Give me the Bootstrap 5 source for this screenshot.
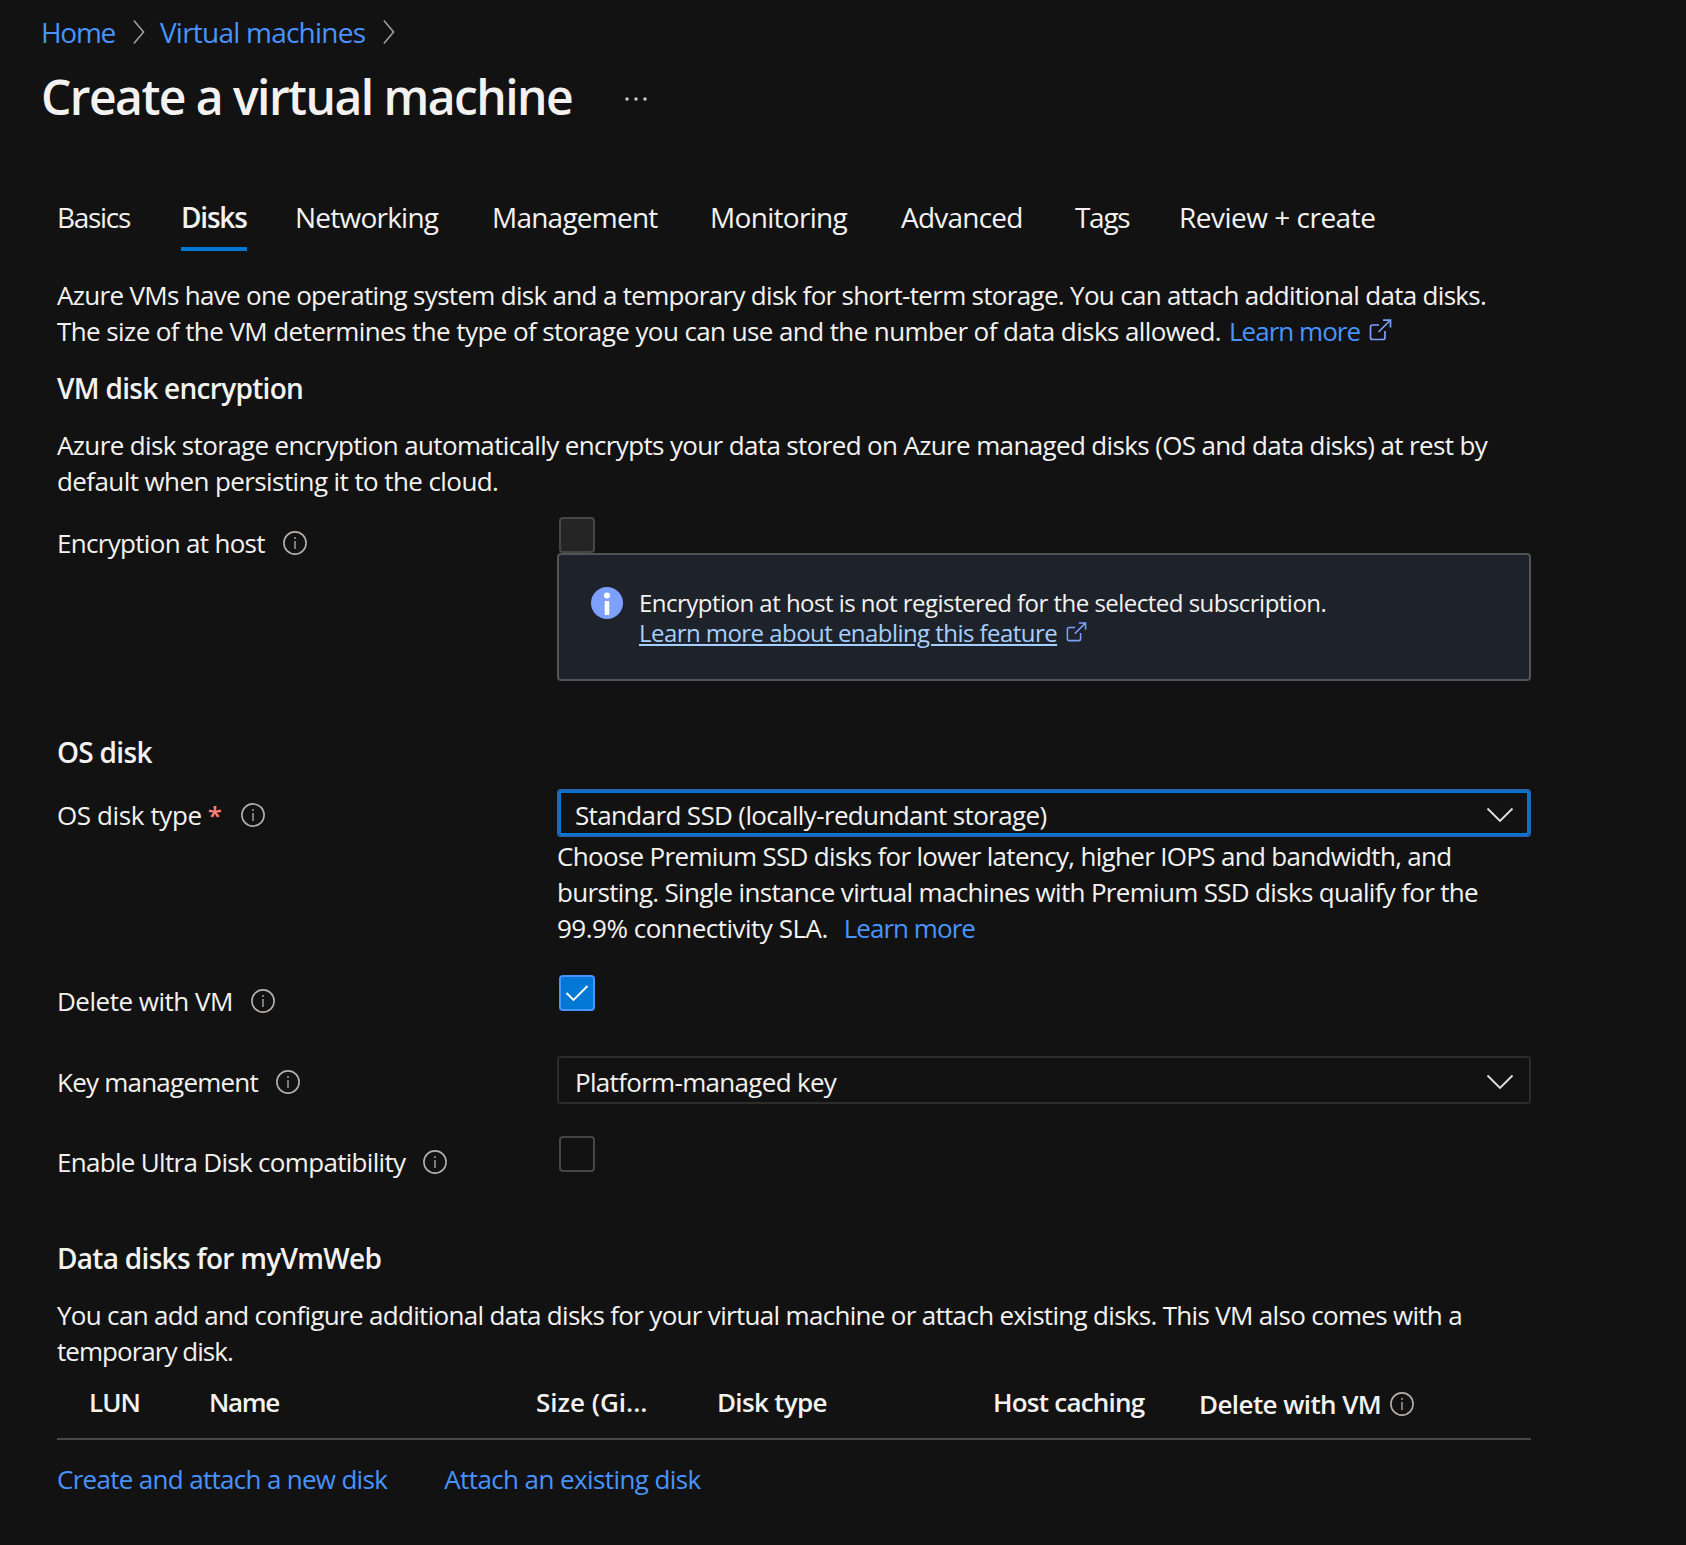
<!DOCTYPE html>
<html lang="en" data-bs-theme="dark">
<head>
<meta charset="utf-8">
<meta name="viewport" content="width=device-width, initial-scale=1">
<title>Create a virtual machine</title>
<link href="https://cdn.jsdelivr.net/npm/bootstrap@5.3.0/dist/css/bootstrap.min.css" rel="stylesheet">
<style>
body{background:#121212;color:#f3f2f1;font:400 26px/36px "Open Sans","Noto Sans",sans-serif;letter-spacing:-.64px;overflow-x:hidden}
a{color:#4894fe;text-decoration:none}
svg{display:block;flex:none}
.text-line{display:block;white-space:nowrap}
.fs-tab{font-size:28px}

/* letter spacing steps */
.ls-0{letter-spacing:0}
.ls-3{letter-spacing:-.38px}
.ls-5{letter-spacing:-.5px}
.ls-6{letter-spacing:-.59px}
.ls-7{letter-spacing:-.69px}
.ls-8{letter-spacing:-.77px}
.ls-9{letter-spacing:-.97px}
.ls-12{letter-spacing:-1.3px}

/* vertical rhythm */
.gap-intro{margin-top:26px}
.gap-text{margin-top:21px}
.gap-enc{margin-top:18px}
.gap-sec{margin-top:53px}
.gap-os{margin-top:19px}
.gap-29{margin-top:29px}
.gap-32{margin-top:32px}
.gap-37{margin-top:37px}
.gap-60{margin-top:60px}

.crumbs{padding:13px 0 0 41px;height:50px}
.crumbs svg{margin:0 15px 0 17px}
.page-title{font-size:48px;line-height:64px;font-weight:600;color:#f3f2f1;letter-spacing:-1.56px;margin:15px 0 0 41px}
.dots{margin:18px 0 0 52px}
.wizard-tabs{display:grid;grid-template-columns:124px 114px 197px 218px 191px 174px 104px auto;margin:70px 0 0 57px;width:1330px}
.wizard-tabs .nav-link{color:#f3f2f1;padding:0 0 12px;border-bottom:4px solid transparent;width:fit-content;white-space:nowrap;border-radius:0}
.wizard-tabs .nav-link.active{font-weight:600;border-color:#0078d4;letter-spacing:-1.2px;width:66px}
.form-body{margin-left:57px;width:1474px}
.sec-title{font-size:28px;line-height:36px;font-weight:600;color:#f3f2f1;letter-spacing:-.7px}
.field-label{width:500px;padding-top:8px;gap:18px;height:44px}
.field-control{width:974px}
.box-check{width:36px;height:36px;border:2px solid #484644;border-radius:4px;margin-left:2px}
.box-check.is-off{background:#252525}
.box-check.is-on{background:#0078d4;border-color:#4894fe}
.notice{height:128px;border:2px solid #505357;border-radius:4px;background:#1e222a;padding:32px 0 0 32px;font-size:24px;line-height:30px;letter-spacing:-.52px}
.notice a{color:#a6d0ff;text-decoration:underline;text-decoration-thickness:2px;text-underline-offset:2px;letter-spacing:-.55px}
.notice-text{margin:1px 0 0 16px}
.ext-icon{margin:-2px 0 0 9px}
.learn{margin-left:8px}
.select-box{height:48px;border:2px solid #2d2c2b;border-radius:4px;padding:3px 15px 0 16px}
.select-box.is-focus{border-color:#2466b4;box-shadow:inset 0 0 0 2px #0078d4}
.helper{margin-top:1px;letter-spacing:-.68px}
.req{color:#ff8078;margin-left:-12px;font-weight:600;width:15px}
.disk-head{height:56px;border-bottom:2px solid #484848;padding-left:32px;font-weight:600;white-space:nowrap;margin-top:15px}
.col-lun{width:120px}
.col-name{width:327px}
.col-size{width:181px}
.col-type{width:276px}
.col-cache{width:206px}
.col-del{height:36px;margin-top:2px;gap:9px}
.disk-links{margin-top:21px;gap:57px}
</style>
</head>
<body>
<svg class="d-none" xmlns="http://www.w3.org/2000/svg">
  <symbol id="i-info" viewBox="0 0 24 24"><g fill="none" stroke="#b3b0ad" stroke-width="1.600"><circle cx="12" cy="12" r="11.100"/><path d="M12 10v8M12 6v2" stroke="#979593"/></g></symbol>
  <symbol id="i-ext" viewBox="0 0 23 22"><path fill="none" stroke="#7da0ff" stroke-width="1.700" d="M10 6H3.500A2 2 0 0 0 1.500 8V18.500A2 2 0 0 0 3.500 20.500H14A2 2 0 0 0 16 18.500V12M9.500 13 21 1.500M14 1.200H21.500V8.500"/></symbol>
  <symbol id="i-down" viewBox="0 0 28 16"><path fill="none" stroke="#e1dfdd" stroke-width="1.900" d="M1.500 1.500 14 14 26.500 1.500"/></symbol>
  <symbol id="i-right" viewBox="0 0 14 28"><path fill="none" stroke="#a19f9d" stroke-width="1.700" d="M2 1.500 12.500 14 2 26.500"/></symbol>
</svg>

<nav class="crumbs d-flex align-items-center fs-tab">
  <a class="ls-12" href="#">Home</a>
  <svg width="13" height="26"><use href="#i-right"/></svg>
  <a class="ls-8" href="#">Virtual machines</a>
  <svg width="13" height="26"><use href="#i-right"/></svg>
</nav>
<div class="d-flex align-items-center">
  <h1 class="page-title mb-0">Create a virtual machine</h1>
  <svg class="dots" width="24" height="8" viewBox="0 0 24 8" fill="#d2d0ce"><circle cx="3" cy="4" r="1.700"/><circle cx="12" cy="4" r="1.700"/><circle cx="21" cy="4" r="1.700"/></svg>
</div>
<ul class="nav wizard-tabs fs-tab">
  <li><a class="nav-link ls-12" href="#">Basics</a></li>
  <li><a class="nav-link active" href="#">Disks</a></li>
  <li><a class="nav-link ls-8" href="#">Networking</a></li>
  <li><a class="nav-link ls-8" href="#">Management</a></li>
  <li><a class="nav-link ls-7" href="#">Monitoring</a></li>
  <li><a class="nav-link ls-8" href="#">Advanced</a></li>
  <li><a class="nav-link ls-12" href="#">Tags</a></li>
  <li><a class="nav-link ls-5" href="#">Review + create</a></li>
</ul>

<main class="form-body">
  <p class="mb-0 gap-intro">
    <span class="text-line ls-7">Azure VMs have one operating system disk and a temporary disk for short-term storage. You can attach additional data disks.</span>
    <span class="d-flex align-items-center"><span class="text-line ls-6">The size of the VM determines the type of storage you can use and the number of data disks allowed.</span>
      <a class="learn ls-9" href="#">Learn more</a>
      <svg class="ext-icon" width="23" height="22"><use href="#i-ext"/></svg></span>
  </p>
  <h2 class="sec-title mb-0 gap-text">VM disk encryption</h2>
  <p class="mb-0 gap-text">
    <span class="text-line">Azure disk storage encryption automatically encrypts your data stored on Azure managed disks (OS and data disks) at rest by</span>
    <span class="text-line ls-6">default when persisting it to the cloud.</span>
  </p>

  <div class="d-flex gap-enc">
    <div class="field-label d-flex align-items-center"><span class="ls-7">Encryption at host</span>
      <svg width="24" height="24"><use href="#i-info"/></svg></div>
    <div class="field-control">
      <div class="box-check is-off"></div>
      <div class="notice d-flex align-items-start">
        <svg width="32" height="32" viewBox="0 0 32 32"><circle cx="16" cy="16" r="16" fill="#7da0ff"/><circle cx="16" cy="8.500" r="3" fill="#fff"/><path d="M13.700 14h4.600v14h-4.600z" fill="#fff"/></svg>
        <div class="notice-text">
          <span class="text-line">Encryption at host is not registered for the selected subscription.</span>
          <span class="d-flex align-items-center"><a href="#">Learn more about enabling this feature</a>
          <svg class="ext-icon" width="21" height="20"><use href="#i-ext"/></svg></span>
        </div>
      </div>
    </div>
  </div>

  <h2 class="sec-title mb-0 gap-sec ls-6">OS disk</h2>
  <div class="d-flex gap-os">
    <div class="field-label d-flex align-items-center"><span class="ls-3">OS disk type</span><span class="req">*</span>
      <svg width="24" height="24"><use href="#i-info"/></svg></div>
    <div class="field-control">
      <div class="select-box is-focus d-flex align-items-center justify-content-between"><span>Standard SSD (locally-redundant storage)</span>
        <svg width="28" height="16"><use href="#i-down"/></svg></div>
      <div class="helper">
        <span class="text-line">Choose Premium SSD disks for lower latency, higher IOPS and bandwidth, and</span>
        <span class="text-line">bursting. Single instance virtual machines with Premium SSD disks qualify for the</span>
        <span class="text-line"><span class="ls-5">99.9% connectivity SLA.</span><a class="ms-3 ls-9" href="#">Learn more</a></span>
      </div>
    </div>
  </div>

  <div class="d-flex gap-29">
    <div class="field-label d-flex align-items-center"><span class="ls-5">Delete with VM</span>
      <svg width="24" height="24"><use href="#i-info"/></svg></div>
    <div class="field-control">
      <div class="box-check is-on"><svg width="32" height="32" viewBox="0 0 32 32" fill="none" stroke="#fff" stroke-width="1.900"><path d="M5.500 16 12.500 23 26.500 9"/></svg></div>
    </div>
  </div>

  <div class="d-flex gap-37">
    <div class="field-label d-flex align-items-center"><span class="ls-8">Key management</span>
      <svg width="24" height="24"><use href="#i-info"/></svg></div>
    <div class="field-control">
      <div class="select-box d-flex align-items-center justify-content-between"><span class="ls-7">Platform-managed key</span>
        <svg width="28" height="16"><use href="#i-down"/></svg></div>
    </div>
  </div>

  <div class="d-flex gap-32">
    <div class="field-label d-flex align-items-center"><span class="ls-7">Enable Ultra Disk compatibility</span>
      <svg width="24" height="24"><use href="#i-info"/></svg></div>
    <div class="field-control"><div class="box-check"></div></div>
  </div>

  <h2 class="sec-title mb-0 gap-60 ls-8">Data disks for myVmWeb</h2>
  <p class="mb-0 gap-text ls-7">
    <span class="text-line">You can add and configure additional data disks for your virtual machine or attach existing disks. This VM also comes with a</span>
    <span class="text-line ls-9">temporary disk.</span>
  </p>
  <div class="disk-head d-flex">
    <span class="col-lun ls-9">LUN</span>
    <span class="col-name ls-12">Name</span>
    <span class="col-size ls-0">Size (Gi...</span>
    <span class="col-type ls-7">Disk type</span>
    <span class="col-cache ls-8">Host caching</span>
    <span class="col-del d-flex align-items-center ls-6">Delete with VM
      <svg width="24" height="24"><use href="#i-info"/></svg></span>
  </div>
  <div class="d-flex disk-links">
    <a class="ls-7" href="#">Create and attach a new disk</a>
    <a class="ls-6" href="#">Attach an existing disk</a>
  </div>
</main>
<script src="https://cdn.jsdelivr.net/npm/bootstrap@5.3.0/dist/js/bootstrap.bundle.min.js"></script>
</body>
</html>
